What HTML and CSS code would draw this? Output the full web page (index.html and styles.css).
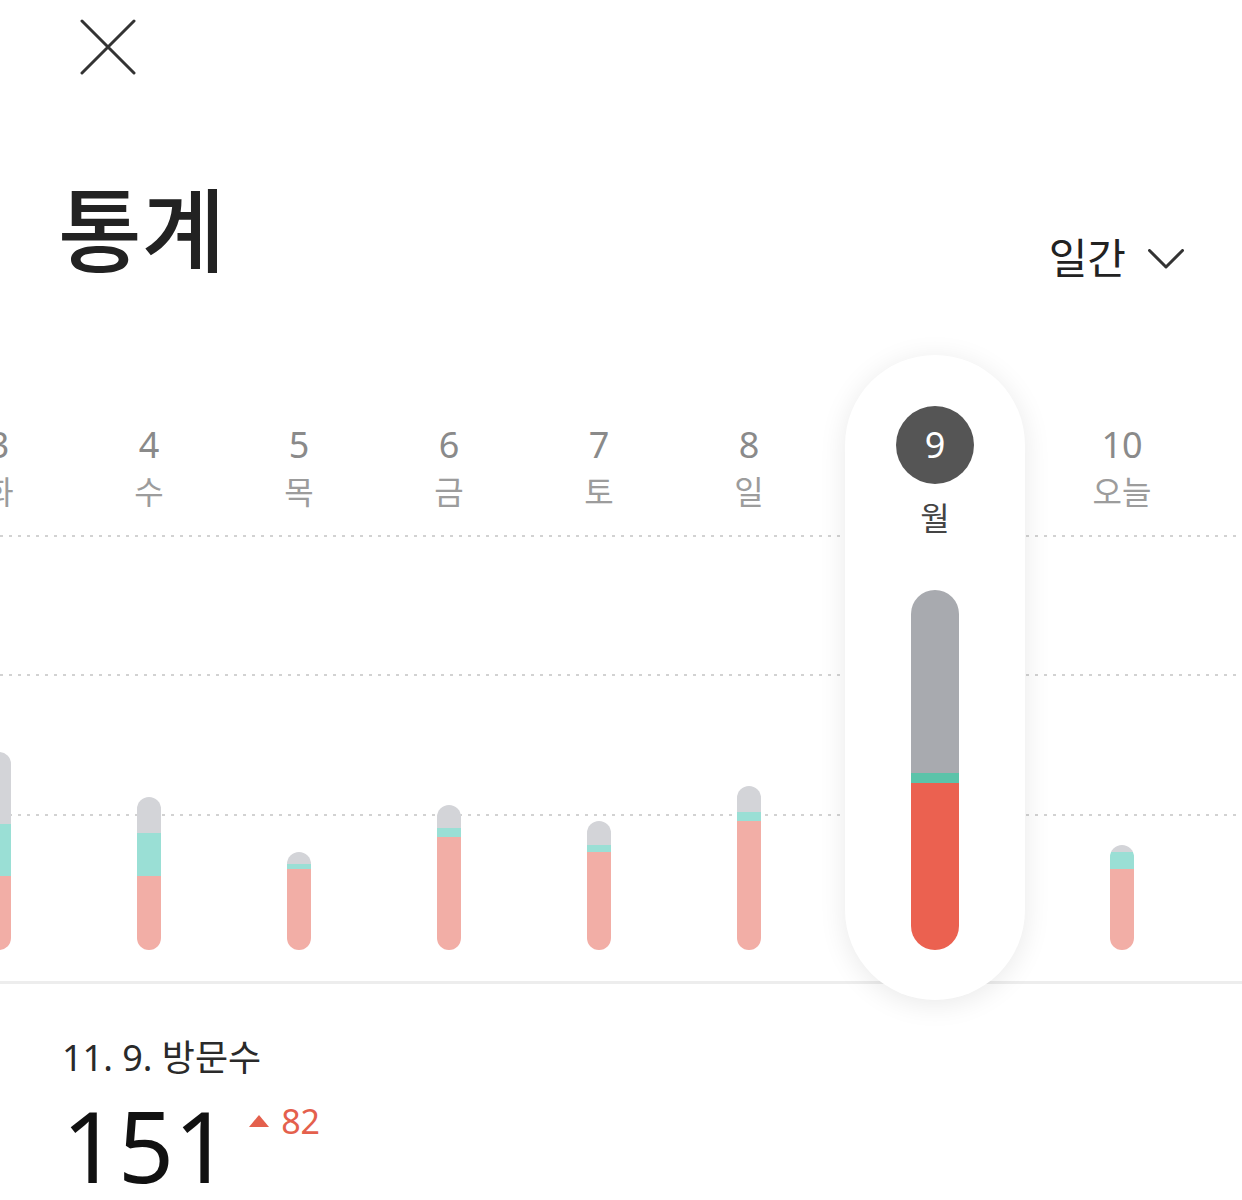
FILE: index.html
```html
<!DOCTYPE html>
<html lang="ko">
<head>
  <meta charset="UTF-8" />
  <meta name="viewport" content="width=device-width, initial-scale=1.0"/>
  <title>통계</title>
  <link rel="stylesheet" href="styles.css">
</head>
<body>
  <div class="screen">
    <div class="top">
      <button class="close" aria-label="닫기">
        <svg width="56" height="56" viewBox="0 0 56 56">
          <path d="M2 2 L54 54 M54 2 L2 54" stroke="#333" stroke-width="3" stroke-linecap="round" fill="none"/>
        </svg>
      </button>
    </div>

    <div class="title-row">
      <h1 class="title">통계</h1>
      <div class="period">
        <span>일간</span>
        <svg width="36" height="20" viewBox="0 0 36 20">
          <path d="M1.5 1.5 L18 18 L34.5 1.5" stroke="#333" stroke-width="3" stroke-linecap="round" stroke-linejoin="round" fill="none"/>
        </svg>
      </div>
    </div>

    <div class="chart">
      <div class="days">
        <div class="day">
          <span class="num">3</span><span class="wd">화</span>
          <div class="bar">
            <div class="seg gray" style="height:72px"></div>
            <div class="seg teal" style="height:52px"></div>
            <div class="seg pink" style="height:74px"></div>
          </div>
        </div>
        <div class="day">
          <span class="num">4</span><span class="wd">수</span>
          <div class="bar">
            <div class="seg gray" style="height:36px"></div>
            <div class="seg teal" style="height:43px"></div>
            <div class="seg pink" style="height:74px"></div>
          </div>
        </div>
        <div class="day">
          <span class="num">5</span><span class="wd">목</span>
          <div class="bar">
            <div class="seg gray" style="height:12px"></div>
            <div class="seg teal" style="height:5px"></div>
            <div class="seg pink" style="height:81px"></div>
          </div>
        </div>
        <div class="day">
          <span class="num">6</span><span class="wd">금</span>
          <div class="bar">
            <div class="seg gray" style="height:23px"></div>
            <div class="seg teal" style="height:9px"></div>
            <div class="seg pink" style="height:113px"></div>
          </div>
        </div>
        <div class="day">
          <span class="num">7</span><span class="wd">토</span>
          <div class="bar">
            <div class="seg gray" style="height:24px"></div>
            <div class="seg teal" style="height:7px"></div>
            <div class="seg pink" style="height:98px"></div>
          </div>
        </div>
        <div class="day">
          <span class="num">8</span><span class="wd">일</span>
          <div class="bar">
            <div class="seg gray" style="height:26px"></div>
            <div class="seg teal" style="height:9px"></div>
            <div class="seg pink" style="height:129px"></div>
          </div>
        </div>
        <div class="day selected">
          <span class="num">9</span><span class="wd">월</span>
          <div class="bar">
            <div class="seg gray" style="height:183px"></div>
            <div class="seg teal" style="height:10px"></div>
            <div class="seg pink" style="height:167px"></div>
          </div>
        </div>
        <div class="day">
          <span class="num">10</span><span class="wd">오늘</span>
          <div class="bar">
            <div class="seg gray" style="height:7px"></div>
            <div class="seg teal" style="height:17px"></div>
            <div class="seg pink" style="height:81px"></div>
          </div>
        </div>
      </div>
    </div>

    <div class="summary">
      <p class="summary-label">11. 9. 방문수</p>
      <div class="summary-value">
        <span class="total">151</span>
        <span class="delta"><span class="tri"></span>82</span>
      </div>
    </div>
  </div>
</body>
</html>
```

FILE: styles.css
```css
body {
  margin: 0;
  background: #fff;
  font-family: "Noto Sans", "Noto Sans CJK KR", sans-serif;
  color: #222;
}
.screen {
  width: 1242px;
  height: 1200px;
  overflow: hidden;
}
.top {
  padding: 19px 0 0 80px;
  height: 57px;
}
.close {
  border: none;
  background: none;
  padding: 0;
  display: block;
}
.close svg {
  display: block;
}
.title-row {
  display: flex;
  justify-content: space-between;
  align-items: flex-end;
  padding: 0 58px 0 58px;
  margin-top: 104px;
}
.title {
  margin: 0;
  font-family: "Noto Sans CJK KR", sans-serif;
  font-size: 91px;
  font-weight: 500;
  line-height: 1;
  color: #222;
}
.period {
  display: flex;
  align-items: center;
  gap: 22px;
  font-family: "Noto Sans CJK KR", sans-serif;
  font-size: 42px;
  line-height: 1;
  color: #222;
  margin-bottom: -6px;
}
.period svg {
  display: block;
  margin-top: 6px;
}

/* chart */
.chart {
  margin-top: 84px;
  height: 626px;
  border-bottom: 3px solid #ededed;
  background-image:
    linear-gradient(to right, #d2d2d2 3px, transparent 3px),
    linear-gradient(to right, #d2d2d2 3px, transparent 3px),
    linear-gradient(to right, #d2d2d2 3px, transparent 3px);
  background-size: 9px 2px;
  background-repeat: repeat-x;
  background-position: 0 180px, 0 319px, 0 459px;
}
.days {
  display: flex;
  height: 100%;
  margin-left: -76px;
}
.day {
  flex: none;
  width: 150px;
  box-sizing: border-box;
  display: flex;
  flex-direction: column;
  align-items: center;
  padding: 72px 0 31px;
}
.num {
  font-size: 36px;
  line-height: 36px;
  color: #8a8a8a;
}
.wd {
  font-family: "Noto Sans CJK KR", sans-serif;
  font-size: 32px;
  line-height: 34px;
  margin-top: 10px;
  color: #9c9c9c;
}
.bar {
  margin-top: auto;
  width: 24px;
  border-radius: 12px;
  overflow: hidden;
  display: flex;
  flex-direction: column;
}
.seg.gray { background: #d3d4d8; }
.seg.teal { background: #9adfd5; }
.seg.pink { background: #f2aea6; }

.day.selected {
  width: 180px;
  margin: 0 22px -19px 21px;
  padding: 51px 0 50px;
  background: #fff;
  border-radius: 90px;
  box-shadow: 0 4px 28px rgba(0, 0, 0, 0.09);
  position: relative;
  z-index: 1;
}
.selected .num {
  width: 78px;
  height: 78px;
  line-height: 78px;
  text-align: center;
  border-radius: 50%;
  background: #555;
  color: #fff;
}
.selected .wd {
  margin-top: 15px;
  color: #444;
}
.selected .bar {
  width: 48px;
  border-radius: 24px;
}
.selected .seg.gray { background: #a8aaaf; }
.selected .seg.teal { background: #5bc3a9; }
.selected .seg.pink { background: #eb6150; }

/* summary */
.summary {
  padding: 52px 62px 0;
}
.summary-label {
  margin: 0;
  font-size: 36px;
  line-height: 44px;
  color: #2a2a2a;
}
.summary-value {
  display: flex;
  align-items: flex-start;
  margin-top: 17px;
}
.total {
  font-size: 98px;
  line-height: 96px;
  color: #111;
}
.delta {
  display: flex;
  align-items: center;
  margin: 2px 0 0 19px;
  font-size: 34px;
  line-height: 44px;
  color: #e4604d;
}
.tri {
  width: 0;
  height: 0;
  border-left: 10px solid transparent;
  border-right: 10px solid transparent;
  border-bottom: 12px solid #e4604d;
  margin-right: 12px;
}
```
